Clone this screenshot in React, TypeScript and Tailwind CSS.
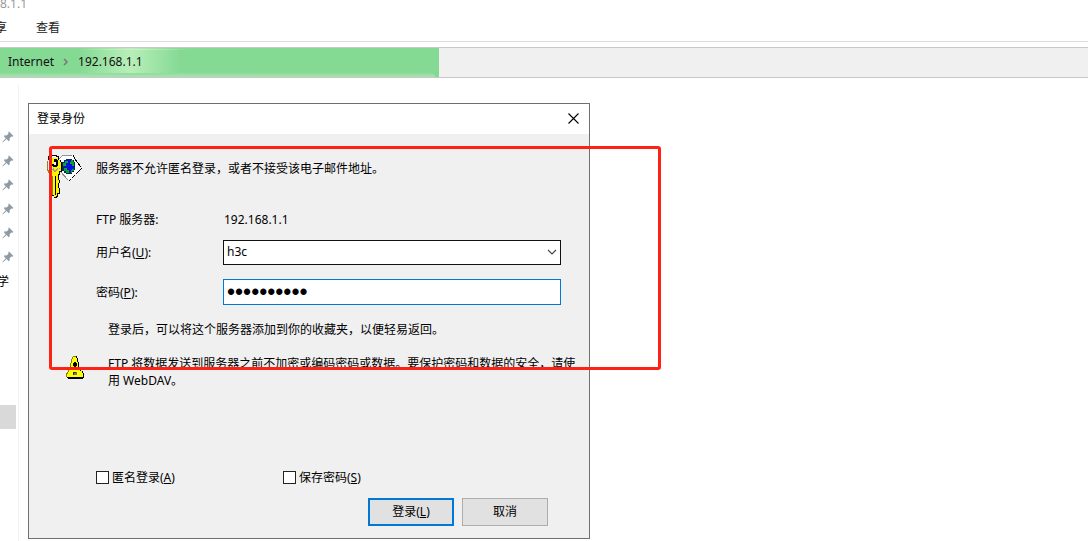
import { useState } from "react";

const pins = ["pin-1", "pin-2", "pin-3", "pin-4", "pin-5", "pin-6"];

function PinIcon() {
  return (
    <svg width="12" height="12" viewBox="0 0 12 12" fill="#8d9aa3" aria-hidden="true">
      <path d="M7 0.6 11.4 5 10.4 5.8 9.4 5.4 7.6 7.3 7.7 9.3 6.7 10.2 4.6 8.1 0.8 11.5 0.4 11.1 3.8 7.3 1.8 5.3 2.7 4.3 4.7 4.4 6.6 2.6 6.2 1.6Z" />
    </svg>
  );
}

function KeyIcon() {
  return (
    <svg width="36" height="48" viewBox="0 0 36 48" shapeRendering="crispEdges" aria-hidden="true">
      {/* tag behind the key */}
      <path d="M13 9 17 5H27L35 18 23 31 14 21Z" fill="#fff" />
      <path d="M13 9 17 5H26M14 21 22 30" fill="none" stroke="#909090" />
      <path d="M27 5 29 9 35 17V19L23 31" fill="none" stroke="#000" strokeDasharray="4 1" />
      {/* globe */}
      <path d="M20 9h6v1h2v2h1v8h-1v2h-2v2h-6v-1h-2v-2h-2v-9h2v-2h2z" fill="#062a5c" />
      <path d="M20 10h6v2h2v7h-2v3h-5v-2h-3v-8h2z" fill="#0a12dc" />
      <path d="M19 11h3v2h-2v3h-3v-3h2zM25 10h2v2h1v4h-2v-2h-2v-2h1zM18 18h3v2h2v3h-3v-2h-2zM26 19h2v2h-2v2h-1v-3h1z" fill="#0aa52c" />
      {/* ring */}
      <path d="M2.500 10V6.500H4V5.500H10V6.500H12V8" fill="none" stroke="#000" />
      <path d="M1.500 11v9h1v2h2" fill="none" stroke="#8a861c" />
      {/* key */}
      <path d="M4 8h9v2h2v2h1v10h-2v3h-1v5h1v3h-1v5h1v6h-2v3h-1v1H8v-2H6V26H5v-2H4z" fill="#000" />
      <path d="M4 8h8v2h2v2h1v9h-2v3h-1v6h1v3h-1v5h1v5h-2v3h-1v1H8v-2H6V26H5v-2H4z" fill="#fff200" />
      <path d="M5 18h1v1H5zM7 18h1v1H7zM11 18h1v1h-1zM13 18h1v1h-1zM6 19h2v1H6zM10 19h2v1h-2zM7 20h4v1H7zM8 21h2v1H8z" fill="#9c9c9c" />
      <path d="M9 26h1v19H9z" fill="#000" />
      <path d="M6 26h1v19H6zM4 22h1v2H4z" fill="#8a861c" />
      <path d="M8 9h3v1h1v6h-1v1H7v-1H6v-2h2z" fill="#000" />
      <path d="M8 12h2v3H8z" fill="#eee" />
    </svg>
  );
}

function WarningIcon() {
  return (
    <svg width="18" height="23" viewBox="0 0 18 23" shapeRendering="crispEdges" aria-hidden="true">
      <path d="M7 0h4v2h1v4h1v5h2v4h2v2h1v5h-1v1H2v-1H1v-5h1v-3h1v-3h2V6h1V2h1z" fill="#000" />
      <path d="M7 0h3v2h1v4h1v5h2v4h2v2h1v4H1v-4h1v-2h1v-4h2V6h1V2h1z" fill="#ff0" />
      <path d="M7 0h3v1H7zM6 1h1v2H6zM5 3h1v4H5zM4 7h1v4H4zM2 13h1v3H2zM1 16h1v2H1zM0 17h1v4H0z" fill="#858200" />
      <path d="M8 6h2v1h1v3h-1v2H8v-2H7V7h1z" fill="#000" />
      <path d="M7 16h4v3H7z" fill="#777" />
      <path d="M7 16h1v3H7zM8 16h2v1H8z" fill="#333" />
    </svg>
  );
}

function AddressBar() {
  return (
    <div className="mt-[5px] h-[31px] border-y border-[#c8c8c8] bg-[#f0f0f0]">
      <div className="relative h-full w-[439px] overflow-hidden bg-[#84d993]">
        <div className="absolute inset-y-0 left-[78px] w-[104px] bg-[linear-gradient(90deg,transparent,#b8efb9_50%,transparent)]" />
        <div className="absolute bottom-0 left-0 h-1 w-[435px] rounded-tr-lg bg-linear-to-t from-[#a9e3b1] to-[#8fdb9c]" />
        <div className="absolute top-px left-[78px] h-px w-[114px] bg-[linear-gradient(90deg,transparent,#c5f0c8_50%,transparent)]" />
        <nav className="relative flex items-center gap-2 pt-[5px] pl-2 text-[#111]">
          <a href="#internet">Internet</a>
          <svg width="8" height="8" viewBox="0 0 8 8" fill="none" stroke="#777" strokeWidth="1.5" aria-hidden="true">
            <path d="M2 1 5 4 2 7" />
          </svg>
          <a href="#server">192.168.1.1</a>
        </nav>
      </div>
    </div>
  );
}

function LoginDialog() {
  const [user, setUser] = useState("h3c");
  const [password, setPassword] = useState("abcdefghij");

  return (
    <form
      role="dialog"
      aria-labelledby="dialog-title"
      onSubmit={(e) => e.preventDefault()}
      className="absolute top-[103px] left-7 w-[562px] border border-[#6f6f6f] bg-[#f0f0f0]"
    >
      <header className="flex h-[30px] items-center justify-between bg-white pr-2.5 pb-0.5 pl-2">
        <h1 id="dialog-title">登录身份</h1>
        <button type="button" aria-label="关闭">
          <svg width="11" height="11" viewBox="0 0 11 11" stroke="#000" strokeWidth="1.1" aria-hidden="true">
            <path d="M0.500 0.500 10.500 10.500M10.500 0.500 0.500 10.500" />
          </svg>
        </button>
      </header>

      <div className="flex pt-4 pl-[17px]">
        <KeyIcon />
        <p className="pt-[10px] pl-[14px]">服务器不允许匿名登录，或者不接受该电子邮件地址。</p>
      </div>

      <div className="grid grid-cols-[127px_1fr] items-center pt-[13px] pr-7 pl-[67px]">
        <span>FTP 服务器:</span>
        <span className="pl-px">192.168.1.1</span>
      </div>

      <div className="grid grid-cols-[127px_1fr] items-center gap-y-[14px] pt-3 pr-7 pl-[67px]">
        <label htmlFor="user">用户名(<u>U</u>):</label>
        <div className="relative">
          <select
            id="user"
            value={user}
            onChange={(e) => setUser(e.target.value)}
            className="block h-[25px] w-full appearance-none border border-[#111] bg-white pb-0.5 pl-[3px] outline-none"
          >
            <option>h3c</option>
          </select>
          <svg className="pointer-events-none absolute top-[9px] right-1" width="10" height="7" viewBox="0 0 10 7" fill="none" stroke="#444" strokeWidth="1.1" aria-hidden="true">
            <path d="M1 1 5 5 9 1" />
          </svg>
        </div>

        <label htmlFor="password">密码(<u>P</u>):</label>
        <input
          id="password"
          type="password"
          value={password}
          onChange={(e) => setPassword(e.target.value)}
          className="h-[26px] w-full border border-[#0078d7] bg-white pl-[3px] font-['Liberation_Sans',sans-serif] text-[23px] outline-none"
        />
      </div>

      <p className="pt-4 pl-[79px]">登录后，可以将这个服务器添加到你的收藏夹，以便轻易返回。</p>

      <div className="flex pt-[17px] pr-2 pl-[37px]">
        <div className="w-[42px] shrink-0 pt-px">
          <WarningIcon />
        </div>
        <p>FTP 将数据发送到服务器之前不加密或编码密码或数据。要保护密码和数据的安全，请使用 WebDAV。</p>
      </div>

      <div className="mt-[80px] grid grid-cols-[187px_1fr] pl-[67px]">
        <label className="flex items-center gap-[3px]">
          <input type="checkbox" className="size-[13px] appearance-none border border-[#222] bg-white checked:bg-[#0078d7]" />
          <span>匿名登录(<u>A</u>)</span>
        </label>
        <label className="flex items-center gap-[3px]">
          <input type="checkbox" className="size-[13px] appearance-none border border-[#222] bg-white checked:bg-[#0078d7]" />
          <span>保存密码(<u>S</u>)</span>
        </label>
      </div>

      <div className="flex justify-end gap-2 pt-3 pr-[41px] pb-3">
        <button type="submit" className="h-7 w-[86px] border-2 border-[#0078d7] bg-[#e1e1e1] pb-0.5">登录(<u>L</u>)</button>
        <button type="button" className="h-7 w-[86px] border border-[#adadad] bg-[#e1e1e1] pb-0.5">取消</button>
      </div>
    </form>
  );
}

export default function App() {
  return (
    <div className="relative min-h-screen overflow-hidden bg-white font-['Noto_Sans','Noto_Sans_CJK_SC',sans-serif] text-xs leading-[17px] text-black">
      {/* explorer window */}
      <div className="h-[14px] leading-2 text-[#999]">8.1.1</div>
      <div className="flex h-7 items-center gap-[29px] border-b border-[#dadbdc] text-[#222]">
        <button type="button" className="flex w-[7px] justify-end overflow-hidden">享</button>
        <button type="button">查看</button>
      </div>
      <AddressBar />

      <aside className="mt-[7px] h-[456px] w-[19px] border-r border-[#f3f3f3] pt-10">
        <ul>
          {pins.map((p) => (
            <li key={p} className="flex h-6 items-center pl-0.5">
              <PinIcon />
            </li>
          ))}
          <li className="flex h-6 w-[9px] items-center justify-end overflow-hidden">学</li>
        </ul>
        <div className="mt-[112px] h-6 w-4 bg-[#d9d9d9]" />
      </aside>

      <LoginDialog />

      {/* highlight frame */}
      <div className="pointer-events-none absolute top-[146px] left-[49px] h-[224px] w-[612px] rounded-[3px] border-3 border-[#ff2114]" />
    </div>
  );
}
